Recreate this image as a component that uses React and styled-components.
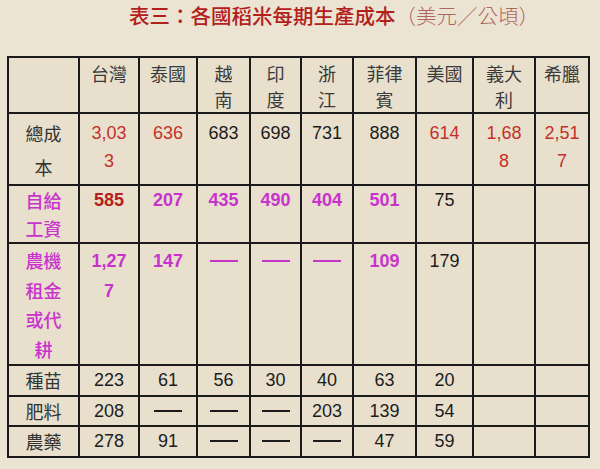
import React from "react";
import styled, { createGlobalStyle } from "styled-components";

const GlobalStyle = createGlobalStyle`
  html, body {
    margin: 0;
    padding: 0;
    background: #ebe4d2;
  }
  body {
    font-family: "Liberation Sans", "Noto Sans CJK TC", sans-serif;
  }
`;

const COLS = [71, 60, 58, 53, 51, 52, 63, 57, 62, 54];

const COLORS = {
  black: "#1c1c1c",
  grey: "#333333",
  red: "#c4302a",
  darkred: "#b52020",
  magenta: "#c833cc",
};

const HEADER = ["", "台灣", "泰國", "越\n南", "印\n度", "浙\n江", "菲律\n賓", "美國", "義大\n利", "希臘"];

const ROWS = [
  {
    h: 70,
    lh: 28,
    pad: 5,
    label: { text: "總成\n本", tone: "grey", lh: 34, pad: 2 },
    cells: [
      { text: "3,03\n3", tone: "red" },
      { text: "636", tone: "red" },
      { text: "683" },
      { text: "698" },
      { text: "731" },
      { text: "888" },
      { text: "614", tone: "red" },
      { text: "1,68\n8", tone: "red" },
      { text: "2,51\n7", tone: "red" },
    ],
  },
  {
    h: 58,
    lh: 28,
    pad: 0,
    label: { text: "自給\n工資", tone: "magenta", lh: 28, pad: 0, bold: true },
    cells: [
      { text: "585", tone: "darkred", bold: true },
      { text: "207", tone: "magenta", bold: true },
      { text: "435", tone: "magenta", bold: true },
      { text: "490", tone: "magenta", bold: true },
      { text: "404", tone: "magenta", bold: true },
      { text: "501", tone: "magenta", bold: true },
      { text: "75" },
      { text: "" },
      { text: "" },
    ],
  },
  {
    h: 122,
    lh: 30,
    pad: 2,
    label: { text: "農機\n租金\n或代\n耕", tone: "magenta", lh: 29.5, pad: 2, bold: true },
    cells: [
      { text: "1,27\n7", tone: "magenta", bold: true },
      { text: "147", tone: "magenta", bold: true },
      { dash: true, tone: "magenta" },
      { dash: true, tone: "magenta" },
      { dash: true, tone: "magenta" },
      { text: "109", tone: "magenta", bold: true },
      { text: "179" },
      { text: "" },
      { text: "" },
    ],
  },
  {
    h: 31,
    lh: 26,
    pad: 1,
    label: { text: "種苗", tone: "grey" },
    cells: ["223", "61", "56", "30", "40", "63", "20", "", ""].map((t) => ({ text: t })),
  },
  {
    h: 30,
    lh: 26,
    pad: 1,
    label: { text: "肥料", tone: "grey" },
    cells: [
      { text: "208" },
      { dash: true },
      { dash: true },
      { dash: true },
      { text: "203" },
      { text: "139" },
      { text: "54" },
      { text: "" },
      { text: "" },
    ],
  },
  {
    h: 31,
    lh: 26,
    pad: 1,
    label: { text: "農藥", tone: "grey" },
    cells: [
      { text: "278" },
      { text: "91" },
      { dash: true },
      { dash: true },
      { dash: true },
      { text: "47" },
      { text: "59" },
      { text: "" },
      { text: "" },
    ],
  },
];

const Page = styled.div`
  width: 600px;
  height: 469px;
  overflow: hidden;
  background: #ebe4d2;
`;

const Title = styled.h1`
  margin: 0;
  padding: 2px 0 0 129px;
  height: 56px;
  box-sizing: border-box;
  font-family: "Noto Sans CJK TC", sans-serif;
  font-size: 20.5px;
  font-weight: 500;
  line-height: 27px;
  color: #b3201c;
  white-space: nowrap;
`;

const Unit = styled.span`
  font-weight: 300;
  color: #b0665c;
`;

const Table = styled.table`
  margin-left: 7px;
  border-collapse: collapse;
  table-layout: fixed;
  width: 582px;
  background: #e8e0cd;
`;

const Row = styled.tr`
  height: ${(p) => p.$h}px;
`;

const Cell = styled.td`
  border: 2px solid #1a1a1a;
  padding: ${(p) => p.$pad}px 0 0;
  vertical-align: top;
  text-align: center;
  white-space: pre-line;
  font-family: ${(p) =>
    p.$cjk ? '"Noto Sans CJK TC", sans-serif' : '"Liberation Sans", "Noto Sans CJK TC", sans-serif'};
  font-size: 18px;
  font-weight: ${(p) => (p.$bold ? (p.$cjk ? 500 : 700) : 400)};
  line-height: ${(p) => p.$lh}px;
  color: ${(p) => COLORS[p.$tone] || COLORS.black};
  overflow: hidden;
`;

const HeadCell = styled(Cell)`
  color: #3a3a3a;
`;

const Dash = styled.span`
  display: inline-block;
  width: 28px;
  height: 2px;
  vertical-align: middle;
  margin-top: -3px;
  background: ${(p) => COLORS[p.$tone] || COLORS.black};
`;

export default function App() {
  return (
    <Page>
      <GlobalStyle />
      <Title>
        表三：各國稻米每期生產成本<Unit>（美元／公頃）</Unit>
      </Title>
      <Table>
        <colgroup>
          {COLS.map((w, i) => (
            <col key={i} style={{ width: w }} />
          ))}
        </colgroup>
        <tbody>
          <Row $h={56}>
            {HEADER.map((t, i) => (
              <HeadCell key={i} $cjk $lh={26} $pad={2}>
                {t}
              </HeadCell>
            ))}
          </Row>
          {ROWS.map((r, ri) => (
            <Row key={ri} $h={r.h}>
              <Cell
                $cjk
                $tone={r.label.tone}
                $lh={r.label.lh ?? r.lh}
                $pad={r.label.pad ?? r.pad}
                $bold={r.label.bold}
              >
                {r.label.text}
              </Cell>
              {r.cells.map((c, ci) => (
                <Cell key={ci} $tone={c.tone} $bold={c.bold} $lh={r.lh} $pad={r.pad}>
                  {c.dash ? <Dash $tone={c.tone} /> : c.text}
                </Cell>
              ))}
            </Row>
          ))}
        </tbody>
      </Table>
    </Page>
  );
}
